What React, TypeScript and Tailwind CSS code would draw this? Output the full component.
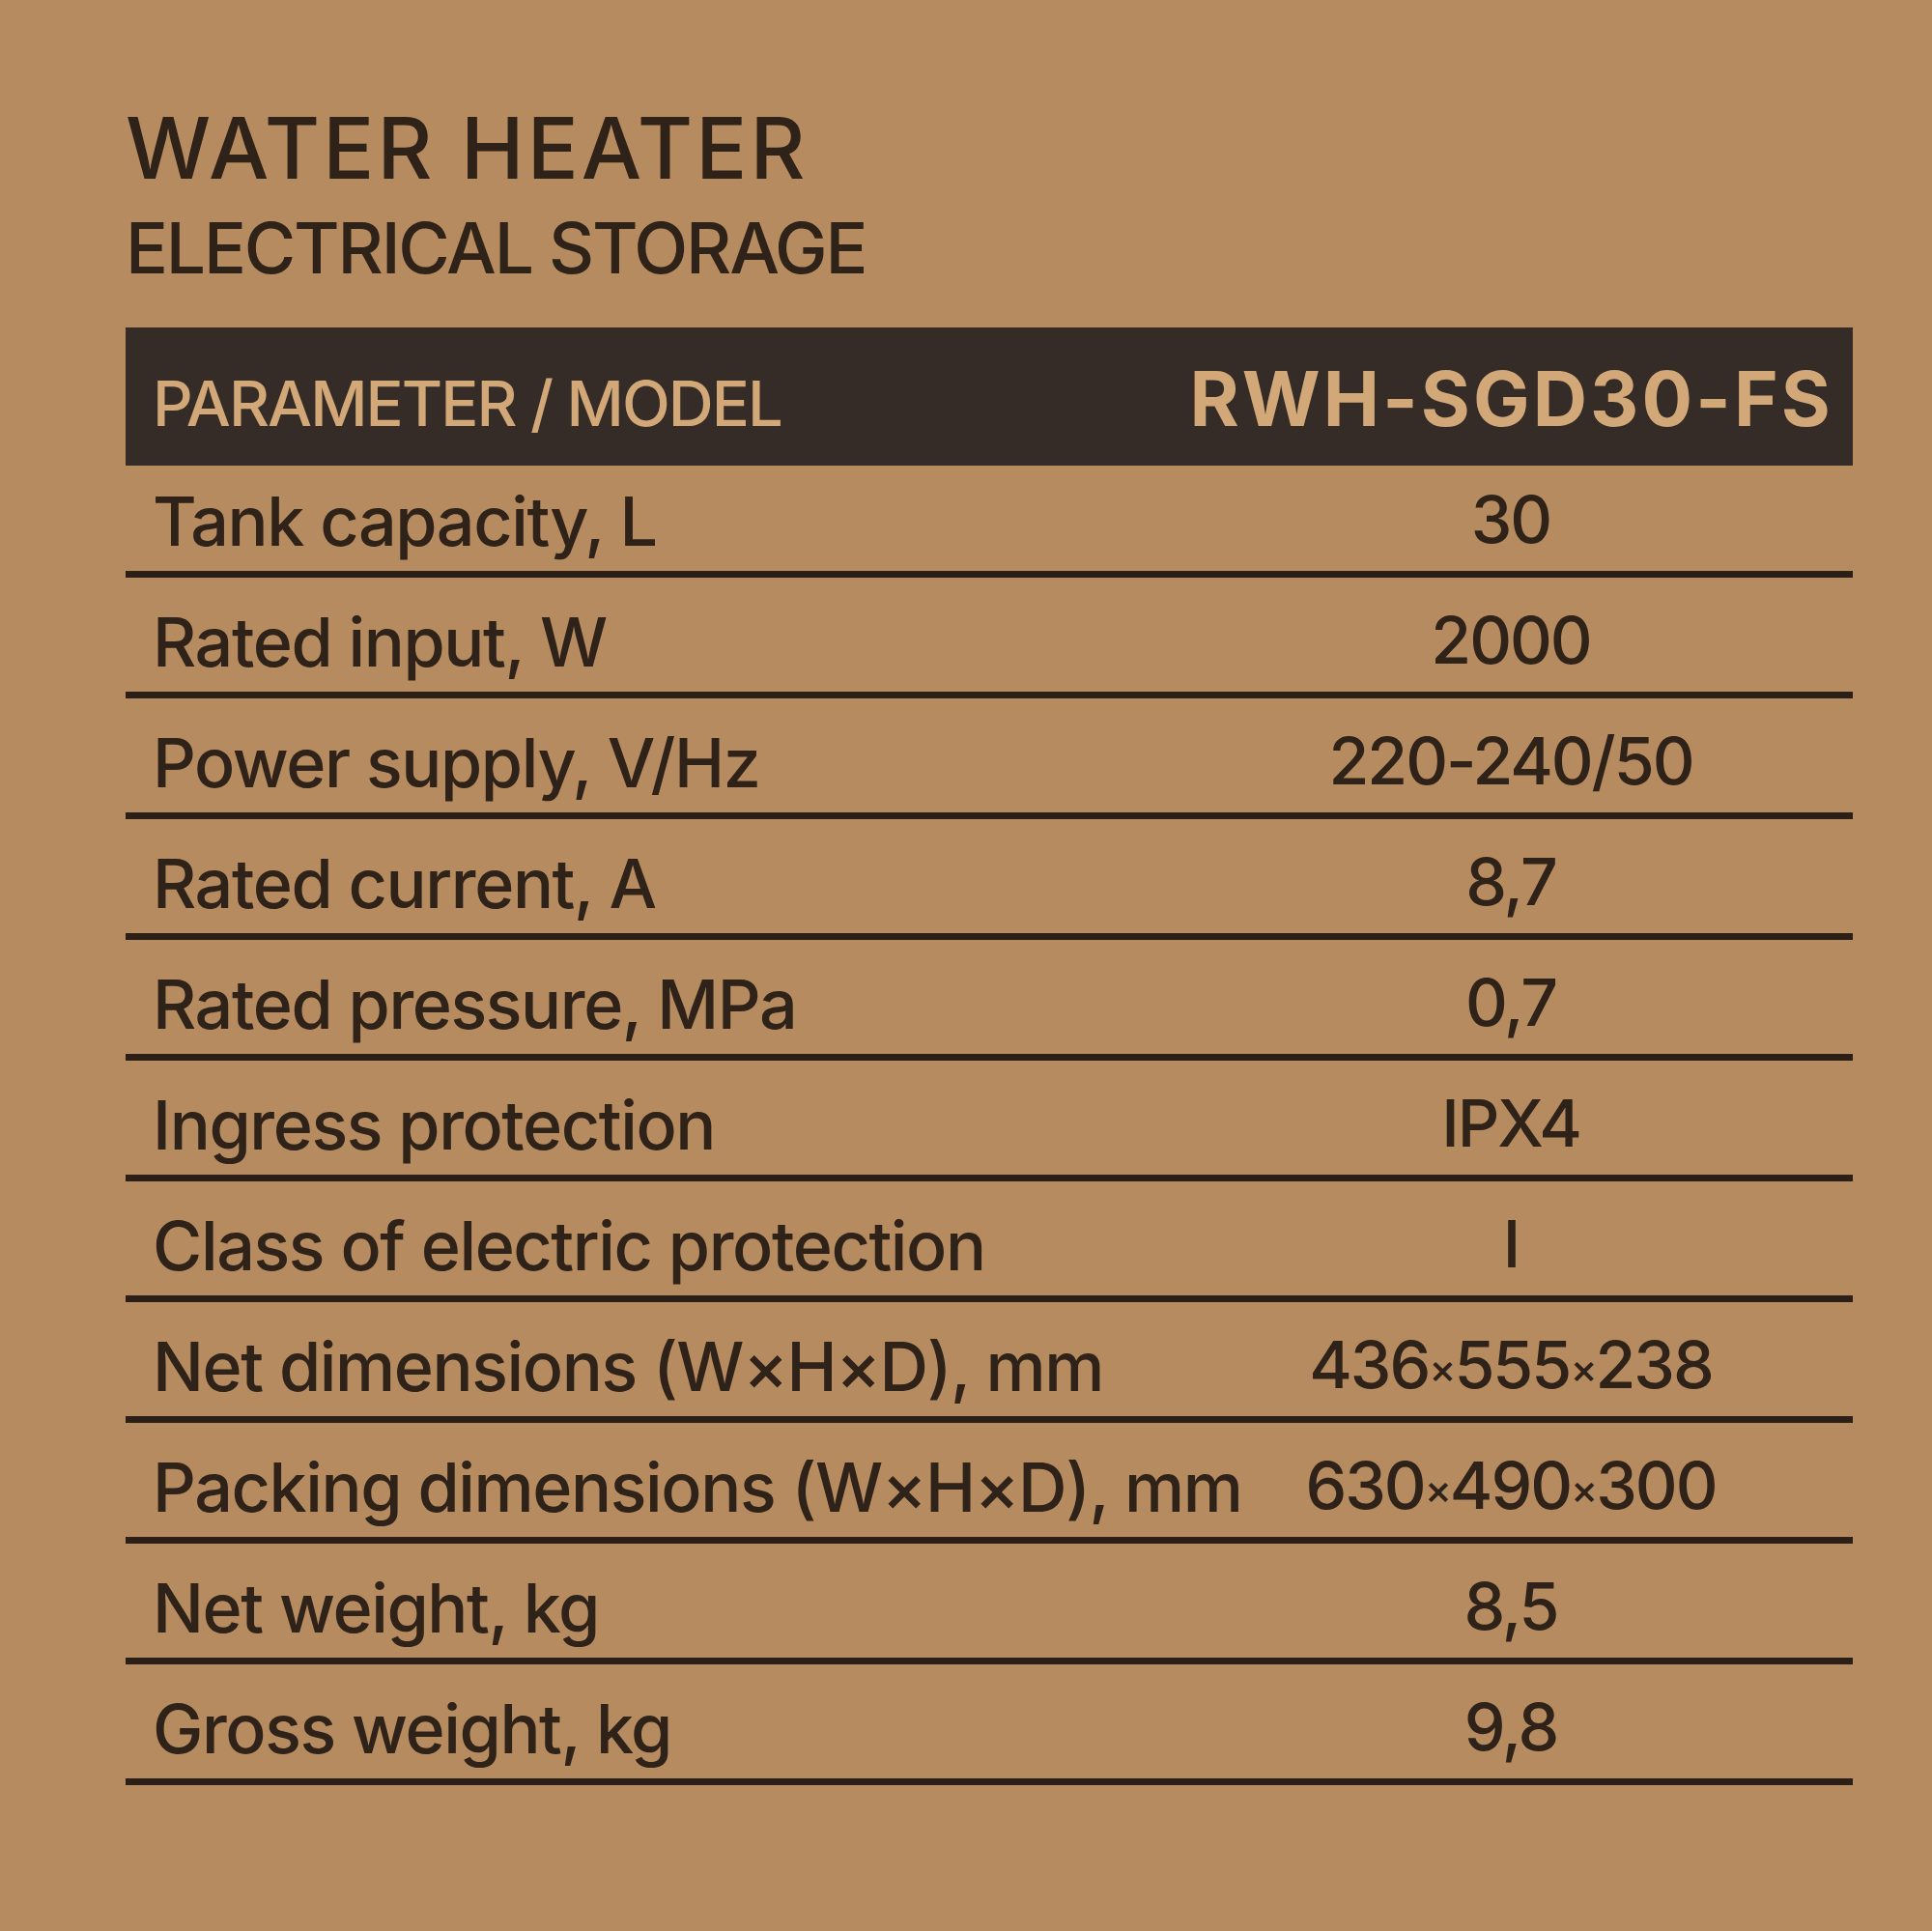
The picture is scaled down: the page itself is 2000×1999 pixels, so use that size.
const ROWS: { label: string; value: string }[] = [
  { label: 'Tank capacity, L', value: '30' },
  { label: 'Rated input, W', value: '2000' },
  { label: 'Power supply, V/Hz', value: '220-240/50' },
  { label: 'Rated current, A', value: '8,7' },
  { label: 'Rated pressure, MPa', value: '0,7' },
  { label: 'Ingress protection', value: 'IPX4' },
  { label: 'Class of electric protection', value: 'I' },
  { label: 'Net dimensions (W×H×D), mm', value: '436×555×238' },
  { label: 'Packing dimensions (W×H×D), mm', value: '630×490×300' },
  { label: 'Net weight, kg', value: '8,5' },
  { label: 'Gross weight, kg', value: '9,8' },
];

// the printed "×" is a small cross, narrower than the font's own glyph
function Value({ text }: { text: string }) {
  const parts = text.split('×');
  return (
    <>
      {parts.map((p, i) => (
        <span key={i}>
          {i > 0 && <span className="text-[0.62em] align-[0.12em]">×</span>}
          {p}
        </span>
      ))}
    </>
  );
}

export default function App() {
  return (
    <div
      className="w-[2000px] h-[1999px] bg-[#b68b60] text-[#2e2219] overflow-hidden"
      style={{ fontFamily: 'Inter, "Noto Sans", sans-serif' }}
    >
      <div className="pl-[130px] pr-[82px] pt-[109px]">
        {/* Title */}
        <h1 className="text-[88px] leading-none font-medium tracking-[0.035em] uppercase">Water heater</h1>
        <h2 className="mt-[23px] text-[73px] leading-none font-medium tracking-[-0.03em] uppercase">
          Electrical storage
        </h2>

        {/* Spec table */}
        <div className="mt-[46px]">
          <div className="h-[143px] bg-[#352c27] text-[#d2a878] flex items-baseline justify-between pl-[28px] pr-[20px] pt-[35px]">
            <span className="text-[65px] leading-none font-medium tracking-[-0.03em] uppercase">
              Parameter / Model
            </span>
            <span className="text-[78px] leading-none font-bold tracking-[0.04em]">RWH-SGD30-FS</span>
          </div>

          {ROWS.map((row, i) => (
            <div
              key={row.label}
              className={
                'flex items-end border-b-[7px] border-[#2b1f17] pb-[16px] ' +
                (i === 0 ? 'h-[116px]' : 'h-[125px]')
              }
            >
              <span className="flex-1 min-w-0 whitespace-nowrap pl-[28px] text-[70px] leading-none font-medium tracking-[-0.02em]">
                {row.label}
              </span>
              <span className="w-[708px] shrink-0 whitespace-nowrap text-center text-[68px] leading-none font-medium tracking-[-0.03em] pb-[4px]">
                <Value text={row.value} />
              </span>
            </div>
          ))}
        </div>
      </div>
    </div>
  );
}
